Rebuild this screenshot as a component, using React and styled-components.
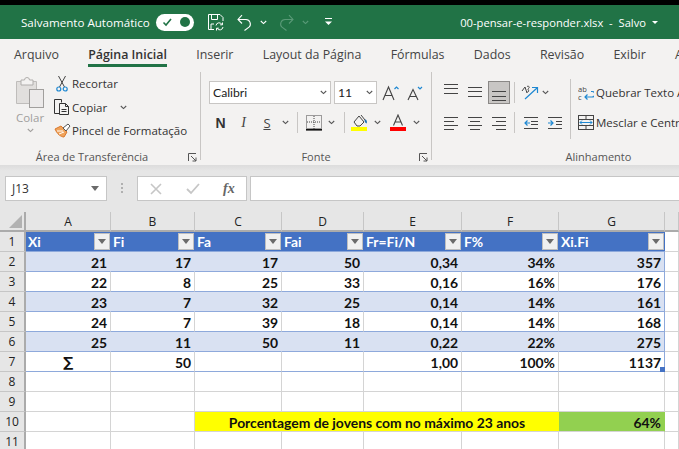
import React from "react";
import styled, { createGlobalStyle } from "styled-components";

const GlobalStyle = createGlobalStyle`
  html, body {
    margin: 0;
    padding: 0;
    background: #fff;
  }
  * {
    box-sizing: border-box;
  }
`;

const Window = styled.div`
  width: 679px;
  height: 449px;
  overflow: hidden;
  display: flex;
  flex-direction: column;
  background: #f3f2f1;
  border-top: 5px solid #000;
  font-family: "Open Sans", "Noto Sans", sans-serif;
`;

const TitleBar = styled.div`
  height: 34px;
  flex: none;
  background: #217346;
  color: #fff;
  display: flex;
  align-items: center;
  padding-left: 21px;
  font-size: 11.6px;
`;

const AutoSave = styled.span`
  width: 135px;
  white-space: nowrap;
`;

const Toggle = styled.div`
  width: 38px;
  height: 17px;
  border-radius: 9px;
  background: #fff;
  display: flex;
  align-items: center;
  justify-content: space-between;
  padding: 0 4px 0 6px;
  margin-right: 13px;
`;

const ToggleKnob = styled.div`
  width: 10px;
  height: 10px;
  border-radius: 50%;
  background: #217346;
`;

const FileName = styled.span`
  margin-left: auto;
  margin-right: 6px;
  font-size: 11.2px;
  white-space: pre;
`;

const TitleCaret = styled.div`
  width: 0;
  height: 0;
  margin-right: 21px;
  border-left: 3px solid transparent;
  border-right: 3px solid transparent;
  border-top: 3px solid #fff;
`;

const Slot = styled.div`
  width: ${(p) => p.$w}px;
  margin-left: ${(p) => p.$l || 0}px;
  flex: none;
  display: flex;
  align-items: center;
  justify-content: center;
`;

const Tabs = styled.div`
  height: 30px;
  flex: none;
  display: flex;
  gap: 29.3px;
  padding-left: 14px;
  color: #444;
  font-size: 12.4px;
  white-space: nowrap;
`;

const Tab = styled.div`
  height: 28px;
  line-height: 31px;
  border-bottom: ${(p) => (p.$active ? "3px solid #217346" : "none")};
  font-weight: ${(p) => (p.$active ? 600 : 400)};
  color: ${(p) => (p.$active ? "#333" : "#444")};
`;

const Ribbon = styled.div`
  height: 96px;
  flex: none;
  display: flex;
  padding-top: 3px;
  color: #333;
  font-size: 12px;
`;

const Group = styled.div`
  width: ${(p) => p.$w}px;
  flex: none;
  height: 88px;
  display: flex;
  flex-direction: column;
  border-right: 1px solid #c8c6c4;
`;

const GroupBody = styled.div`
  flex: 1;
  display: flex;
  min-height: 0;
`;

const GroupLabel = styled.div`
  height: 17px;
  margin-bottom: -5px;
  display: flex;
  align-items: center;
  justify-content: center;
  position: relative;
  font-size: 11px;
  color: #555;
  white-space: nowrap;
  padding-right: ${(p) => p.$pr || 0}px;
`;

const Launcher = styled.svg`
  position: absolute;
  right: 3px;
  top: 5px;
`;

const PasteCol = styled.div`
  width: 52px;
  padding-top: 5px;
  display: flex;
  flex-direction: column;
  align-items: center;
  padding-left: 8px;
  color: #a19f9d;
`;

const PasteLabel = styled.div`
  font-size: 11.5px;
  margin: 2px 0 3px;
  line-height: 15px;
`;

const ToolList = styled.div`
  display: flex;
  flex-direction: column;
`;

const Tool = styled.div`
  height: 23.5px;
  display: flex;
  align-items: center;
  white-space: nowrap;
  font-size: 11.5px;
`;

const ToolIcon = styled.div`
  width: 20px;
  flex: none;
  display: flex;
  justify-content: center;
`;

const Stack = styled.div`
  display: flex;
  flex-direction: column;
  padding-left: ${(p) => p.$pl || 0}px;
  padding-top: ${(p) => p.$pt || 0}px;
`;

const WrapStack = styled.div`
  height: 60px;
  margin: 7px 0 0 7px;
  padding: 2px 0 0 7px;
  border-left: 1px solid #c8c6c4;
  display: flex;
  flex-direction: column;
`;

const ToolRow = styled.div`
  display: flex;
  align-items: center;
  height: ${(p) => p.$h}px;
  margin-bottom: ${(p) => p.$mb || 0}px;
`;

const Combo = styled.div`
  width: ${(p) => p.$w}px;
  height: 23px;
  margin-right: 3px;
  background: #fff;
  border: 1px solid #c8c6c4;
  display: flex;
  align-items: center;
  justify-content: space-between;
  padding: 0 3px;
  font-family: "Lato", sans-serif;
  font-size: 12.2px;
  color: #222;
`;

const VSep = styled.div`
  width: 1px;
  height: 21px;
  flex: none;
  background: #c8c6c4;
  margin: 0 ${(p) => p.$r || 3}px 0 ${(p) => p.$l || 3}px;
`;

const GlyphN = styled.span`
  font-family: "Liberation Sans", sans-serif;
  font-weight: 700;
  font-size: 14px;
  color: #333;
`;

const GlyphI = styled.span`
  font-family: "Liberation Serif", serif;
  font-style: italic;
  font-size: 14px;
  color: #444;
`;

const GlyphS = styled.span`
  font-size: 13px;
  color: #444;
  text-decoration: underline;
`;

const AlignBtn = styled.div`
  width: ${(p) => (p.$on ? 22 : 24)}px;
  height: 23px;
  margin: ${(p) => (p.$on ? "0 1px" : "0")};
  flex: none;
  display: flex;
  align-items: center;
  justify-content: center;
  background: ${(p) => (p.$on ? "#c8c6c4" : "transparent")};
  border: ${(p) => (p.$on ? "1px solid #8a8886" : "none")};
`;

const WrapRow = styled.div`
  display: flex;
  align-items: center;
  gap: 2px;
  height: ${(p) => p.$h}px;
  margin-bottom: ${(p) => p.$mb || 0}px;
  white-space: nowrap;
  font-size: 11.5px;
`;

const FormulaBar = styled.div`
  flex: none;
  height: 47px;
  background: linear-gradient(#dcdcdc, #e6e6e6 6px);
  display: flex;
  padding: 11px 0 11px 5px;
`;

const NameBox = styled.div`
  width: 102px;
  background: #fff;
  border: 1px solid #c6c6c6;
  display: flex;
  align-items: center;
  justify-content: space-between;
  padding: 0 7px 0 6px;
  font-size: 12px;
  color: #333;
`;

const Grip = styled.div`
  width: 30px;
  display: flex;
  align-items: center;
  justify-content: center;
`;

const FxBox = styled.div`
  width: 110px;
  background: #fff;
  border: 1px solid #c6c6c6;
  margin-right: 3px;
  display: flex;
  align-items: center;
  padding-left: 12px;
`;

const FxText = styled.span`
  margin-left: 23px;
  font-family: "Liberation Serif", serif;
  font-style: italic;
  font-weight: 700;
  font-size: 14px;
  color: #666;
`;

const CheckMark = styled.svg`
  margin-left: 24px;
`;

const FormulaInput = styled.div`
  flex: 1;
  background: #fff;
  border: 1px solid #c6c6c6;
  border-right: none;
`;

const Sheet = styled.div`
  flex: 1;
  display: grid;
  grid-template-columns: 26px 85px 84px 87px 82px 98px 97px 106px 14px;
  grid-auto-rows: 20px;
  grid-template-rows: 20px;
  background: #fff;
  font-family: "Lato", sans-serif;
  font-size: 13.9px;
  font-weight: 700;
  color: #111;
`;

const Corner = styled.div`
  background: #e6e6e6;
  border-right: 2px solid #ababab;
  border-bottom: 2px solid #ababab;
  display: flex;
  align-items: flex-end;
  justify-content: flex-end;
  padding: 0 2px 2px 0;
`;

const ColHead = styled.div`
  background: #e6e6e6;
  border-right: 1px solid #c6c6c6;
  border-bottom: 2px solid #ababab;
  display: flex;
  align-items: center;
  justify-content: center;
  font-family: "Open Sans", sans-serif;
  font-weight: 400;
  font-size: 12px;
  color: #222;
`;

const RowHead = styled.div`
  background: #e6e6e6;
  border-right: 2px solid #ababab;
  border-bottom: 1px solid #c6c6c6;
  display: flex;
  align-items: center;
  justify-content: center;
  font-family: "Open Sans", sans-serif;
  font-weight: 400;
  font-size: 12px;
  color: #222;
`;

const Cell = styled.div`
  display: flex;
  align-items: center;
  justify-content: ${(p) => (p.$center ? "center" : "flex-end")};
  padding: 1px 3px 0;
  white-space: nowrap;
  position: relative;
  background: ${(p) => p.$bg || "#fff"};
  border-right: 1px solid ${(p) => p.$vline || "#d4d4d4"};
  border-bottom: 1px solid ${(p) => p.$hline || "#d4d4d4"};
`;

const Sum = styled.span`
  font-family: "DejaVu Sans", sans-serif;
  font-weight: 700;
  font-size: 14px;
`;

const HeadCell = styled.div`
  display: flex;
  align-items: center;
  justify-content: space-between;
  padding: 0 1px 0 2px;
  background: #4472c4;
  color: #fff;
  border-bottom: 1px solid #8ea9db;
`;

const FilterBtn = styled.div`
  width: 16px;
  height: 17px;
  background: #f0f0f0;
  border: 1px solid #bfbfbf;
  display: flex;
  align-items: center;
  justify-content: center;
`;

const Caret = styled.div`
  width: 0;
  height: 0;
  border-left: 4px solid transparent;
  border-right: 4px solid transparent;
  border-top: 5px solid #6b6b6b;
`;

const Banner = styled.div`
  grid-column: span 4;
  background: #ffff00;
  display: flex;
  align-items: center;
  justify-content: center;
  padding: 1px 0 0 0;
  border-bottom: 1px solid #d4d4d4;
  white-space: nowrap;
`;

const FillHandle = styled.div`
  position: absolute;
  right: -1px;
  bottom: -1px;
  width: 5px;
  height: 5px;
  background: #4472c4;
`;

const Chevron = ({ color = "#555" }) => (
  <svg width="7" height="5" viewBox="0 0 7 5">
    <path d="M.8 1l2.7 2.600L6.200 1" fill="none" stroke={color} strokeWidth="1.100" />
  </svg>
);

// linhas dos icones de alinhamento
const Lines = ({ rows, color = "#444" }) => (
  <svg width="16" height="20" viewBox="0 0 16 20">
    {rows.map(([x1, x2, y], i) => (
      <line key={i} x1={x1} x2={x2} y1={y + 0.5} y2={y + 0.5} stroke={color} />
    ))}
  </svg>
);

const OutdentIcon = () => (
  <svg width="16" height="14" viewBox="0 0 16 14" fill="none">
    <path d="M1 1.500h14M8 5.500h7M8 8.500h7M1 12.500h14" stroke="#444" />
    <path d="M7 7H2M4.500 4.500L2 7l2.500 2.500" stroke="#1e88d2" strokeWidth="1.200" />
  </svg>
);

const IndentIcon = () => (
  <svg width="16" height="14" viewBox="0 0 16 14" fill="none">
    <path d="M1 1.500h14M9 5.500h6M9 8.500h6M1 12.500h14" stroke="#444" />
    <path d="M1 7h5M3.500 4.500L6 7 3.500 9.500" stroke="#1e88d2" strokeWidth="1.200" />
  </svg>
);

const SaveIcon = () => (
  <svg width="18" height="18" viewBox="0 0 18 18" fill="none" stroke="#fff" strokeWidth="1">
    <path d="M7 16.500H1.500v-15H13l3 3V8" />
    <path d="M4.500 1.500v5h6v-5M4 16v-5h3" />
    <path d="M9 12.500a3.200 3.200 0 0 1 6-1M16 14a3.200 3.200 0 0 1-6 1.200" />
    <path d="M15.500 9.500v2.300h-2.300M9.500 17.500v-2.300h2.300" />
  </svg>
);

const UndoIcon = ({ color = "#fff", flip }) => (
  <svg width="15" height="17" viewBox="0 0 15 17" fill="none" stroke={color} strokeWidth="1.100">
    <g transform={flip ? "matrix(-1 0 0 1 15 0)" : ""}>
      <path d="M1 5.500h8a4.500 4.500 0 0 1 3 7.700L7.500 16.500" />
      <path d="M5 1.200L1 5.500l4 4" />
    </g>
  </svg>
);

const QuickIcon = () => (
  <svg width="9" height="8" viewBox="0 0 9 8">
    <rect x="1" y="0" width="7" height="1" fill="#fff" />
    <path d="M1 3.500h7L4.500 7z" fill="#fff" />
  </svg>
);

const PasteIcon = () => (
  <svg width="28" height="31" viewBox="0 0 28 31" fill="none">
    <path d="M.5 4.500h20v22H.5z" fill="#e1dfdd" stroke="#bfbdbb" />
    <path d="M5 3h3.500a2.500 2.500 0 0 1 5 0H17v5H5z" fill="#f3f2f1" stroke="#b0aeac" />
    <rect x="13.500" y="12.500" width="14" height="18" fill="#eceaea" stroke="#a19f9d" />
  </svg>
);

const ScissorsIcon = () => (
  <svg width="12" height="17" viewBox="0 0 12 17" fill="none">
    <path d="M2.500 1l6 11M9.500 1l-6 11" stroke="#444" />
    <circle cx="2.800" cy="14" r="2" stroke="#1e88d2" strokeWidth="1.200" />
    <circle cx="9.200" cy="14" r="2" stroke="#1e88d2" strokeWidth="1.200" />
  </svg>
);

const CopyIcon = () => (
  <svg width="16" height="16" viewBox="0 0 16 16" fill="none" stroke="#333">
    <path d="M5.500 14.500h-5V.5h7v3" />
    <path d="M5.500 4.500h6l3 3v8h-9zM11.500 4.500v3h3M7.500 10.500h5M7.500 12.500h5" />
  </svg>
);

const BrushIcon = () => (
  <svg width="17" height="15" viewBox="0 0 17 15" fill="none">
    <path d="M1 6l6-3 6 6-3 5C7 14 3 11 1 6z" fill="#f0a35a" stroke="#d9782d" />
    <path d="M3 8l6 0M5 11l5-2" stroke="#fff" />
    <path d="M9 5l5-4 2 2-4 5z" fill="#fff" stroke="#555" />
  </svg>
);

const GrowIcon = () => (
  <svg width="20" height="16" viewBox="0 0 20 16" fill="none">
    <path d="M3 15L8.500 2 14 15M5 10.500h7" stroke="#444" strokeWidth="1.100" />
    <path d="M14.500 4l2-2 2 2" stroke="#1e88d2" strokeWidth="1.200" />
  </svg>
);

const ShrinkIcon = () => (
  <svg width="20" height="16" viewBox="0 0 20 16" fill="none">
    <path d="M5 15L10 4.500 15 15M6.500 11.500h7" stroke="#444" strokeWidth="1.100" />
    <path d="M15 2l2 2 2-2" stroke="#1e88d2" strokeWidth="1.200" />
  </svg>
);

const BorderIcon = () => (
  <svg width="16" height="16" viewBox="0 0 16 16" fill="none">
    <rect x=".5" y=".5" width="15" height="13" stroke="#444" strokeDasharray="1 1" />
    <path d="M8 1v13M1 7h14" stroke="#444" strokeDasharray="1 1" />
    <rect x="0" y="14" width="16" height="1.600" fill="#111" />
  </svg>
);

const FillIcon = () => (
  <svg width="17" height="18" viewBox="0 0 17 18" fill="none">
    <path d="M3 8l5-6 5 6-4 4H6z" stroke="#444" fill="#f3f2f1" />
    <path d="M10 1l4 5" stroke="#444" />
    <path d="M14 6c1 1 1.500 2 1 3" stroke="#1e70b5" strokeWidth="2" />
    <rect x="0" y="13" width="16" height="4" fill="#ffff00" />
  </svg>
);

const FontColorIcon = () => (
  <svg width="17" height="18" viewBox="0 0 17 18" fill="none">
    <path d="M3.500 11.500L8 1l4.500 10.500M5 8h6" stroke="#444" strokeWidth="1.100" />
    <rect x="0" y="13" width="16" height="4" fill="#ff0000" />
  </svg>
);

const OrientIcon = () => (
  <svg width="18" height="16" viewBox="0 0 18 16" fill="none">
    <path d="M1 6l3-4 2 6M6 1.500c2-1 3 1 1.500 2s1 2 0 3-2 .5-2 0" stroke="#444" />
    <path d="M4 14L16 3M11 2.500h5.500V8" stroke="#1e88d2" strokeWidth="1.200" />
  </svg>
);

const WrapIcon = () => (
  <svg width="16" height="16" viewBox="0 0 16 16" fill="none">
    <text x="0" y="6.500" fontFamily="Open Sans" fontSize="7.500" fill="#444">ab</text>
    <text x="0" y="15" fontFamily="Open Sans" fontSize="7.500" fill="#444">c</text>
    <path d="M13 6.500h1a1.800 1.800 0 0 1 0 5.500H7M9.500 9.500L7 12l2.500 2.500" stroke="#1e88d2" strokeWidth="1.200" />
  </svg>
);

const MergeIcon = () => (
  <svg width="16" height="15" viewBox="0 0 16 15" fill="none">
    <rect x=".5" y=".5" width="15" height="14" stroke="#444" />
    <path d="M1 4.500h14M1 10.500h14M8 1v3M8 11v3" stroke="#444" />
    <path d="M2 7.500h12M4 5.500l-2 2 2 2M12 5.500l2 2-2 2" stroke="#1e88d2" />
  </svg>
);

const LauncherIcon = () => (
  <Launcher width="9" height="9" viewBox="0 0 9 9" fill="none" stroke="#555">
    <path d="M.5 8V.5H8M3 3l5 5M8 4.500V8H4.500" />
  </Launcher>
);

const columns = ["A", "B", "C", "D", "E", "F", "G"];
const headers = ["Xi", "Fi", "Fa", "Fai", "Fr=Fi/N", "F%", "Xi.Fi"];
const rows = [
  ["21", "17", "17", "50", "0,34", "34%", "357"],
  ["22", "8", "25", "33", "0,16", "16%", "176"],
  ["23", "7", "32", "25", "0,14", "14%", "161"],
  ["24", "7", "39", "18", "0,14", "14%", "168"],
  ["25", "11", "50", "11", "0,22", "22%", "275"],
];
const TABLE_LINE = "#8ea9db";

const tabs = ["Arquivo", "Página Inicial", "Inserir", "Layout da Página", "Fórmulas", "Dados", "Revisão", "Exibir", "Automatizar"];

const DataRow = ({ values, n }) => {
  const banded = n % 2 === 0;
  return (
    <>
      <RowHead>{n}</RowHead>
      {values.map((v, i) => (
        <Cell
          key={i}
          $bg={banded ? "#d9e1f2" : "#fff"}
          $hline={TABLE_LINE}
          $vline={i === 6 ? TABLE_LINE : banded ? "#d9e1f2" : "#d4d4d4"}
        >
          {v}
        </Cell>
      ))}
      <Cell />
    </>
  );
};

const EmptyRow = ({ n }) => (
  <>
    <RowHead>{n}</RowHead>
    {[...columns, "H"].map((c) => (
      <Cell key={c} />
    ))}
  </>
);

export default function App() {
  return (
    <Window>
      <GlobalStyle />
      <TitleBar>
        <AutoSave>Salvamento Automático</AutoSave>
        <Toggle>
          <svg width="11" height="9" viewBox="0 0 11 9">
            <path d="M1.500 4.500L4 7l5-6" fill="none" stroke="#217346" strokeWidth="1.600" />
          </svg>
          <ToggleKnob />
        </Toggle>
        <SaveIcon />
        <Slot $w={15} $l={12}>
          <UndoIcon />
        </Slot>
        <Slot $w={7} $l={8}>
          <Chevron color="#fff" />
        </Slot>
        <Slot $w={15} $l={12}>
          <UndoIcon color="#5a9a78" flip />
        </Slot>
        <Slot $w={7} $l={8}>
          <Chevron color="#5a9a78" />
        </Slot>
        <Slot $w={9} $l={15}>
          <QuickIcon />
        </Slot>
        <FileName>00-pensar-e-responder.xlsx  -  Salvo</FileName>
        <TitleCaret />
      </TitleBar>

      <Tabs>
        {tabs.map((t) => (
          <Tab key={t} $active={t === "Página Inicial"}>
            {t}
          </Tab>
        ))}
      </Tabs>

      <Ribbon>
        <Group $w={201}>
          <GroupBody>
            <PasteCol>
              <PasteIcon />
              <PasteLabel>Colar</PasteLabel>
              <Chevron color="#a19f9d" />
            </PasteCol>
            <ToolList>
              <Tool>
                <ToolIcon>
                  <ScissorsIcon />
                </ToolIcon>
                Recortar
              </Tool>
              <Tool>
                <ToolIcon>
                  <CopyIcon />
                </ToolIcon>
                Copiar
                <Slot $w={7} $l={13}>
                  <Chevron />
                </Slot>
              </Tool>
              <Tool>
                <ToolIcon>
                  <BrushIcon />
                </ToolIcon>
                Pincel de Formatação
              </Tool>
            </ToolList>
          </GroupBody>
          <GroupLabel $pr={16}>
            Área de Transferência
            <LauncherIcon />
          </GroupLabel>
        </Group>

        <Group $w={231}>
          <GroupBody>
            <Stack $pl={8} $pt={9}>
              <ToolRow $h={23} $mb={8}>
                <Combo $w={122}>
                  Calibri
                  <Chevron />
                </Combo>
                <Combo $w={43}>
                  11
                  <Chevron />
                </Combo>
                <GrowIcon />
                <Slot $w={20} $l={3}>
                  <ShrinkIcon />
                </Slot>
              </ToolRow>
              <ToolRow $h={21}>
                <Slot $w={23}>
                  <GlyphN>N</GlyphN>
                </Slot>
                <Slot $w={23}>
                  <GlyphI>I</GlyphI>
                </Slot>
                <Slot $w={24}>
                  <GlyphS>S</GlyphS>
                </Slot>
                <Slot $w={12}>
                  <Chevron />
                </Slot>
                <VSep $l={6} $r={3} />
                <Slot $w={25}>
                  <BorderIcon />
                </Slot>
                <Slot $w={11}>
                  <Chevron />
                </Slot>
                <VSep $l={7} $r={2} />
                <Slot $w={25}>
                  <FillIcon />
                </Slot>
                <Slot $w={11}>
                  <Chevron />
                </Slot>
                <Slot $w={25} $l={3}>
                  <FontColorIcon />
                </Slot>
                <Slot $w={11}>
                  <Chevron />
                </Slot>
              </ToolRow>
            </Stack>
          </GroupBody>
          <GroupLabel>
            Fonte
            <LauncherIcon />
          </GroupLabel>
        </Group>

        <Group $w={334}>
          <GroupBody>
            <Stack $pl={7} $pt={9}>
              <ToolRow $h={23} $mb={8}>
                <AlignBtn>
                  <Lines rows={[[1, 15, 1], [1, 15, 5], [1, 15, 10]]} />
                </AlignBtn>
                <AlignBtn>
                  <Lines rows={[[1, 15, 4], [1, 15, 8], [1, 15, 13]]} />
                </AlignBtn>
                <AlignBtn $on>
                  <Lines rows={[[1, 15, 8], [1, 15, 13], [1, 15, 17]]} />
                </AlignBtn>
              </ToolRow>
              <ToolRow $h={21}>
                <AlignBtn>
                  <Lines rows={[[1, 15, 4], [1, 11, 8], [1, 15, 12], [1, 11, 16]]} />
                </AlignBtn>
                <AlignBtn>
                  <Lines rows={[[1, 15, 4], [3, 13, 8], [1, 15, 12], [3, 13, 16]]} />
                </AlignBtn>
                <AlignBtn>
                  <Lines rows={[[1, 15, 4], [5, 15, 8], [1, 15, 12], [5, 15, 16]]} />
                </AlignBtn>
              </ToolRow>
            </Stack>
            <Stack $pt={9}>
              <ToolRow $h={23} $mb={8}>
                <VSep $l={3} $r={6} />
                <OrientIcon />
                <Slot $w={7} $l={3}>
                  <Chevron />
                </Slot>
              </ToolRow>
              <ToolRow $h={21}>
                <VSep $l={3} $r={8} />
                <OutdentIcon />
                <Slot $w={8} />
                <IndentIcon />
              </ToolRow>
            </Stack>
            <WrapStack>
              <WrapRow $h={23} $mb={8}>
                <WrapIcon />
                Quebrar Texto Automaticamente
              </WrapRow>
              <WrapRow $h={21}>
                <MergeIcon />
                Mesclar e Centralizar
              </WrapRow>
            </WrapStack>
          </GroupBody>
          <GroupLabel>Alinhamento</GroupLabel>
        </Group>
      </Ribbon>

      <FormulaBar>
        <NameBox>
          J13
          <Caret />
        </NameBox>
        <Grip>
          <svg width="3" height="11" viewBox="0 0 3 11">
            <path d="M0 0h2v2H0zM0 4h2v2H0zM0 8h2v2H0z" fill="#b0b0b0" />
          </svg>
        </Grip>
        <FxBox>
          <svg width="12" height="12" viewBox="0 0 12 12">
            <path d="M1 1l10 10M11 1L1 11" stroke="#c6c6c6" strokeWidth="1.600" />
          </svg>
          <CheckMark width="14" height="12" viewBox="0 0 14 12">
            <path d="M1 6l4 4 8-9" fill="none" stroke="#c6c6c6" strokeWidth="1.800" />
          </CheckMark>
          <FxText>fx</FxText>
        </FxBox>
        <FormulaInput />
      </FormulaBar>

      <Sheet>
        <Corner>
          <svg width="13" height="13" viewBox="0 0 13 13">
            <path d="M13 0v13H0z" fill="#b2b2b2" />
          </svg>
        </Corner>
        {columns.map((c) => (
          <ColHead key={c}>{c}</ColHead>
        ))}
        <ColHead />

        <RowHead>1</RowHead>
        {headers.map((h) => (
          <HeadCell key={h}>
            {h}
            <FilterBtn>
              <Caret />
            </FilterBtn>
          </HeadCell>
        ))}
        <Cell />

        {rows.map((r, i) => (
          <DataRow key={i} values={r} n={i + 2} />
        ))}

        <RowHead>7</RowHead>
        <Cell $center $hline={TABLE_LINE}>
          <Sum>∑</Sum>
        </Cell>
        <Cell $hline={TABLE_LINE}>50</Cell>
        <Cell $hline={TABLE_LINE} />
        <Cell $hline={TABLE_LINE} />
        <Cell $hline={TABLE_LINE}>1,00</Cell>
        <Cell $hline={TABLE_LINE}>100%</Cell>
        <Cell $hline={TABLE_LINE} $vline={TABLE_LINE}>
          1137
          <FillHandle />
        </Cell>
        <Cell />

        <EmptyRow n={8} />
        <EmptyRow n={9} />

        <RowHead>10</RowHead>
        <Cell />
        <Cell />
        <Banner>Porcentagem de jovens com no máximo 23 anos</Banner>
        <Cell $bg="#92d050" $vline="#92d050">
          64%
        </Cell>
        <Cell />

        <EmptyRow n={11} />
      </Sheet>
    </Window>
  );
}
